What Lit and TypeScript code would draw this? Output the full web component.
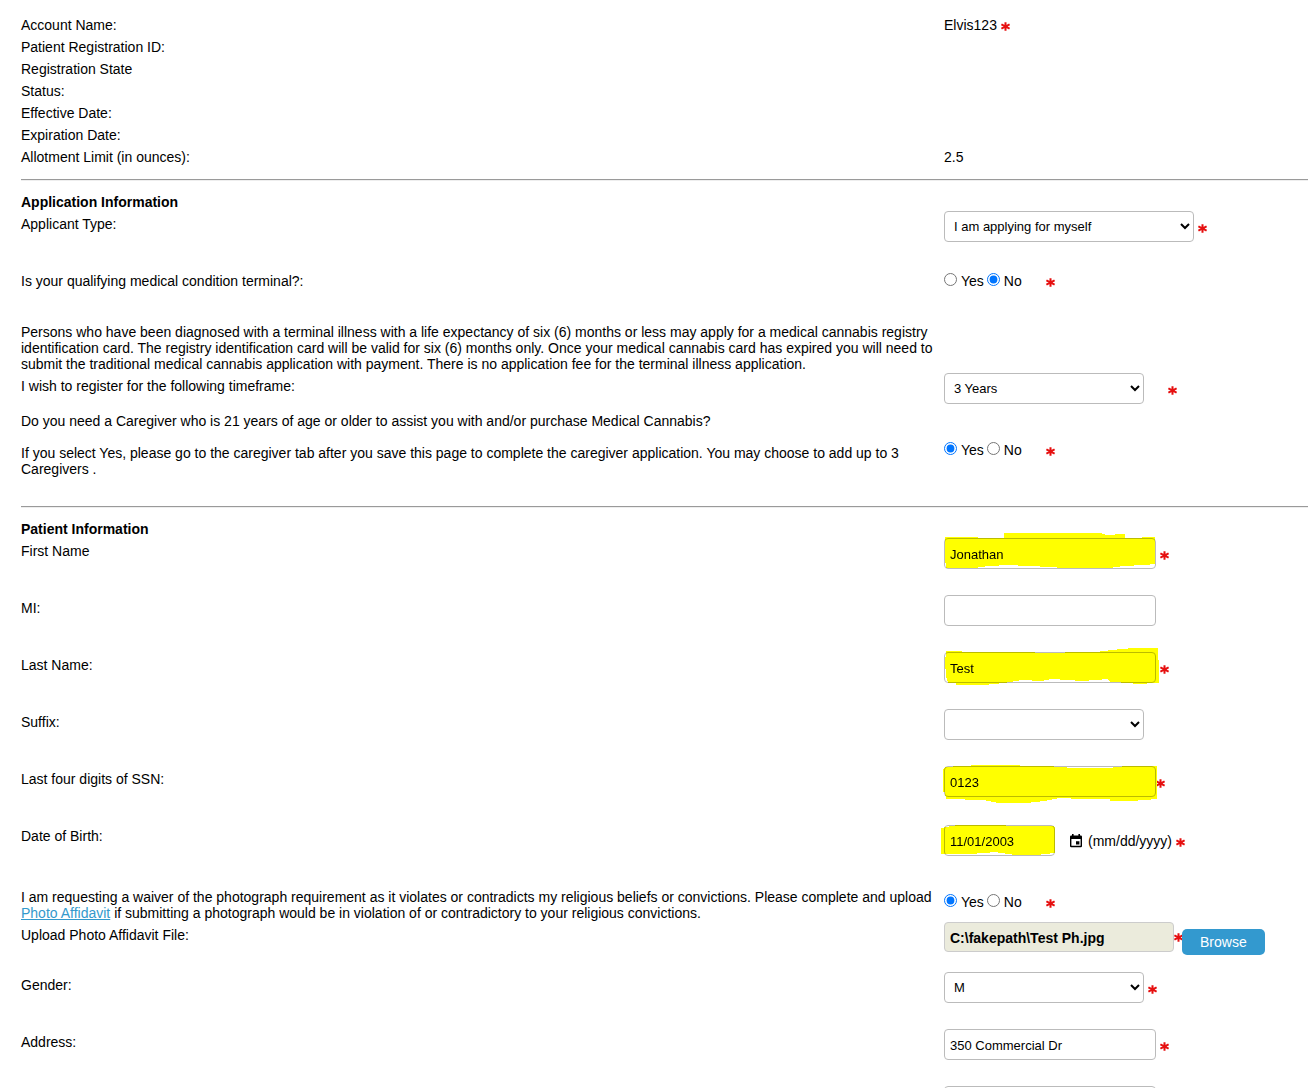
import { LitElement, html, svg, css, nothing } from "lit";
import { customElement } from "lit/decorators.js";

const star = html`<svg class="star" viewBox="0 0 9 9" role="img" aria-label="required">
  <path d="M4.5 0.3V8.7M0.4 2.3L8.6 6.7M8.6 2.3L0.4 6.700" />
</svg>`;

/* Marker strokes, drawn in field coordinates. */
const marks: Record<string, string> = {
  first: "1,0 1,-1 34,-1 34,0 56,0 60,0 60,-5 158,-5 158,-4 161,-4 161,-3 171,-3 171,-4 181,-4 181,0 198,0 198,-1 211,-1 211,26 200,27 180,28 165,30 115,30 110,29 82,28 66,27 44,28 30,30 2,30 1,20",
  last: "2,0 2,-1 18,-1 18,0 91,0 91,1 121,1 121,0 155,0 157,-1 170,-2 176,-3 191,-4 214,-4 214,8 215,8 215,31 190,32 187,31 166,30 164,27 138,29 108,27 97,29 78,28 60,31 40,33 12,33 12,31 4,31 2,24 1,10",
  ssn: "-1,3 1,1 17,0 36,-1 76,-1 76,0 103,0 130,2 165,2 182,0 213,0 213,33 187,35 166,35 166,33 138,33 115,32 110,33 100,35 82,37 54,37 40,34 2,33 1,26 -1,26",
  dob: "-3,3 2,2 7,1 14,0 40,0 83,1 109,1 111,2 111,28 92,30 70,30 66,29 55,28 52,27 40,28 25,29 -3,29",
};

@customElement("form-row")
export class FormRow extends LitElement {
  static styles = css`
    :host { display: grid; grid-template-columns: minmax(0, 923fr) minmax(0, 364fr); }
    .label { padding: 5px 8px 0 0; line-height: 16px; }
    .value { display: block; min-width: 0; }
  `;
  render() {
    return html`<div class="label"><slot name="label"></slot></div>
      <div class="value"><slot></slot></div>`;
  }
}

@customElement("app-root")
export class AppRoot extends LitElement {
  static styles = css`
    :host {
      display: block; height: 100vh; overflow: auto; scrollbar-width: none;
      box-sizing: border-box; background: #fff; color: #000;
      font: 14px/16px "Liberation Sans", Arial, sans-serif;
    }
    * { box-sizing: border-box; }
    form { padding: 14px 0 0 21px; }
    form-row { min-height: 57px; }
    .info { display: grid; grid-template-columns: minmax(0, 923fr) minmax(0, 364fr); margin: 0; row-gap: 6px; padding: 3px 0 14px; }
    .info dt, .info dd { margin: 0; }
    .info dd { display: flex; align-items: center; gap: 4px; }
    hr { margin: 0; height: 2px; border: 0; border-top: 1px solid #9a9a9a; border-bottom: 1px solid #eee; }
    h2 { margin: 0; padding: 13px 0 1px; font-size: 14px; line-height: 16px; font-weight: 700; }
    p { margin: 0; }
    .terminal { min-height: 56px; }
    .note { padding: 0 372px 1px 0; }
    .line { display: flex; align-items: center; gap: 4px; }
    .line.tight { gap: 0; }
    .line.wide { gap: 24px; }
    .low { padding-top: 2px; }
    input.text, select {
      height: 31px; border: 1px solid #bbb; border-radius: 4px; background: #fff; color: #000;
      font: 13px "Liberation Sans", Arial, sans-serif; padding: 0 5px; margin: 0;
    }
    input.text { width: 212px; padding-top: 2px; }
    input.date { width: 111px; }
    input.file { width: 230px; height: 30px; font-size: 14px; font-weight: 700; background: #ebebdc; border-color: #ccc; }
    select { width: 200px; padding-right: 6px; }
    select.long { width: 250px; }
    .star { display: block; flex: none; width: 9px; height: 9px; margin-top: 3px; }
    .info .star { margin-top: 2px; }
    .star path { fill: none; stroke: #e60f0f; stroke-width: 2; }
    .radios { display: flex; align-items: center; padding-top: 5px; height: 21px; }
    .radios input { width: 13px; height: 13px; margin: 0 4px 3px 0; }
    .radios label { margin-right: 3px; }
    .radios .star { margin: 3px 0 0 21px; }
    .marked { position: relative; display: block; isolation: isolate; }
    .marked input { display: block; }
    .mark { position: absolute; left: 0; top: 0; width: 100%; height: 100%; overflow: visible; mix-blend-mode: multiply; pointer-events: none; fill: #ff0; shape-rendering: crispEdges; }
    .short { min-height: 35px; }
    .care { min-height: 98px; }
    .care p + p { margin-top: 16px; }
    .care .radios { margin-top: 29px; }
    .waiver { min-height: 38px; }
    .waiver .radios { margin-top: 5px; }
    .dob { min-height: 61px; }
    .upload { min-height: 50px; }
    .upload .line { align-items: flex-start; }
    .upload .star { margin: 11px -1px 0 0; }
    .cal { width: 14px; height: 14px; margin: 0 5px 0 14px; display: block; }
    .hint { margin-right: 4px; }
    a { color: #3399cc; }
    button { margin: 7px 0 0; height: 26px; padding: 0 18px; border: 0; border-radius: 5px; background: #3399cf; color: #fff; font: 14px "Liberation Sans", Arial, sans-serif; }
  `;

  private text(id: string, value: string, required: boolean, mark = "", tight = false) {
    return html`<div class="line ${tight ? "tight" : ""}">
      <span class="marked">
        <input class="text" id=${id} .value=${value} />
        ${mark ? html`<svg class="mark" aria-hidden="true">${svg`<polygon points=${marks[mark]} />`}</svg>` : nothing}
      </span>
      ${required ? star : nothing}
    </div>`;
  }

  private radios(name: string, yes: boolean) {
    return html`<div class="radios" role="radiogroup" aria-labelledby="${name}-label">
      <input type="radio" name=${name} id="${name}-yes" .checked=${yes} /><label for="${name}-yes">Yes</label>
      <input type="radio" name=${name} id="${name}-no" .checked=${!yes} /><label for="${name}-no">No</label>
      ${star}
    </div>`;
  }

  render() {
    return html`<form @submit=${(e: Event) => e.preventDefault()}>
      <dl class="info">
        <dt>Account Name:</dt><dd>Elvis123 ${star}</dd>
        <dt>Patient Registration ID:</dt><dd></dd>
        <dt>Registration State</dt><dd></dd>
        <dt>Status:</dt><dd></dd>
        <dt>Effective Date:</dt><dd></dd>
        <dt>Expiration Date:</dt><dd></dd>
        <dt>Allotment Limit (in ounces):</dt><dd>2.5</dd>
      </dl>
      <hr />
      <h2>Application Information</h2>
      <form-row>
        <label slot="label" for="type">Applicant Type:</label>
        <div class="line">
          <select class="long" id="type"><option>I am applying for myself</option></select>${star}
        </div>
      </form-row>
      <form-row class="terminal">
        <span slot="label" id="terminal-label">Is your qualifying medical condition terminal?:</span>
        ${this.radios("terminal", false)}
      </form-row>
      <p class="note">Persons who have been diagnosed with a terminal illness with a life expectancy of six (6) months or less may apply for a medical cannabis registry identification card. The registry identification card will be valid for six (6) months only. Once your medical cannabis card has expired you will need to submit the traditional medical cannabis application with payment. There is no application fee for the terminal illness application.</p>
      <form-row class="short">
        <label slot="label" for="frame">I wish to register for the following timeframe:</label>
        <div class="line wide"><select id="frame"><option>3 Years</option></select>${star}</div>
      </form-row>
      <form-row class="care">
        <div slot="label" id="care-label">
          <p>Do you need a Caregiver who is 21 years of age or older to assist you with and/or purchase Medical Cannabis?</p>
          <p>If you select Yes, please go to the caregiver tab after you save this page to complete the caregiver application. You may choose to add up to 3 Caregivers .</p>
        </div>
        ${this.radios("care", true)}
      </form-row>
      <hr />
      <h2>Patient Information</h2>
      <form-row>
        <label slot="label" for="first">First Name</label>
        ${this.text("first", "Jonathan", true, "first")}
      </form-row>
      <form-row>
        <label slot="label" for="mi">MI:</label>
        ${this.text("mi", "", false)}
      </form-row>
      <form-row>
        <label slot="label" for="last">Last Name:</label>
        ${this.text("last", "Test", true, "last")}
      </form-row>
      <form-row>
        <label slot="label" for="suffix">Suffix:</label>
        <select id="suffix"><option></option></select>
      </form-row>
      <form-row>
        <label slot="label" for="ssn">Last four digits of SSN:</label>
        ${this.text("ssn", "0123", true, "ssn", true)}
      </form-row>
      <form-row class="dob">
        <label slot="label" for="dob">Date of Birth:</label>
        <div class="line tight low">
          <span class="marked">
            <input class="text date" id="dob" .value=${"11/01/2003"} />
            <svg class="mark" aria-hidden="true"><polygon points=${marks.dob} /></svg>
          </span>
          <svg class="cal" viewBox="0 0 14 14" aria-hidden="true">
            <path fill="#000" fill-rule="evenodd" d="M3 0h1.6v1.500h4.800V0H11v1.500h.8A1.200 1.200 0 0 1 13 2.700V12a1.200 1.200 0 0 1-1.200 1.200H2.200A1.200 1.200 0 0 1 1 12V2.700A1.200 1.200 0 0 1 2.200 1.500H3zM2.400 5v6.800h9.200V5zM7 7.200h3.400v3.400H7z" />
          </svg>
          <span class="hint">(mm/dd/yyyy)</span>${star}
        </div>
      </form-row>
      <form-row class="waiver">
        <span slot="label" id="waiver-label">I am requesting a waiver of the photograph requirement as it violates or contradicts my religious beliefs or convictions. Please complete and upload <a href="#affidavit">Photo Affidavit</a> if submitting a photograph would be in violation of or contradictory to your religious convictions.</span>
        ${this.radios("waiver", true)}
      </form-row>
      <form-row class="upload">
        <label slot="label" for="file">Upload Photo Affidavit File:</label>
        <div class="line tight">
          <input class="text file" id="file" readonly .value=${"C:\\fakepath\\Test Ph.jpg"} />${star}
          <button type="button">Browse</button>
        </div>
      </form-row>
      <form-row>
        <label slot="label" for="gender">Gender:</label>
        <div class="line"><select id="gender"><option>M</option></select>${star}</div>
      </form-row>
      <form-row>
        <label slot="label" for="address">Address:</label>
        ${this.text("address", "350 Commercial Dr", true)}
      </form-row>
      <form-row>
        <input class="text" aria-label="Address line 2" />
      </form-row>
    </form>`;
  }
}
